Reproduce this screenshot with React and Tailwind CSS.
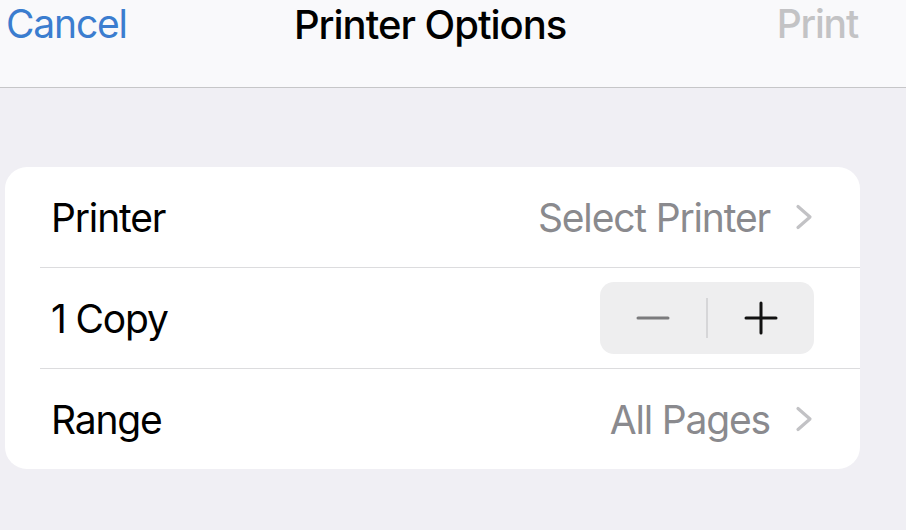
import React from "react";

const font = { fontFamily: "Inter, 'Noto Sans', sans-serif" };

function Chevron() {
  return (
    <svg width="18" height="26" viewBox="0 0 18 26" className="shrink-0">
      <path d="M3 2.5 L15 13 L3 23.5" fill="none" stroke="#c2c2c5" strokeWidth="3.2" strokeLinecap="round" strokeLinejoin="round" />
    </svg>
  );
}

function Row({ label, children }) {
  return (
    <div className="flex items-center h-[100px] pl-[46px] pr-[47px]">
      <span className="text-[39px] leading-none tracking-[-0.03em] text-black">{label}</span>
      <div className="ml-auto flex items-center">{children}</div>
    </div>
  );
}

export default function App() {
  return (
    <div className="w-[906px] h-[530px] bg-[#f0eff4] flex flex-col overflow-hidden" style={font}>
      <div className="h-[88px] shrink-0 bg-[#f9f9fb] border-b border-[#c6c6c8] flex items-start pt-[4px]">
        <span className="pl-[6px] text-[39px] leading-[1.05] tracking-[-0.03em] text-[#3b7dcf]">Cancel</span>
        <span className="ml-[167px] text-[40px] leading-[1.05] font-medium tracking-[-0.025em] text-black">Printer Options</span>
        <span className="ml-auto pr-[48px] text-[39px] leading-[1.05] font-medium tracking-[-0.03em] text-[#c3c3c5]">Print</span>
      </div>
      <div className="mt-[79px] ml-[5px] w-[855px] rounded-[22px] bg-white flex flex-col">
        <Row label="Printer">
          <span className="text-[39px] leading-none tracking-[-0.03em] text-[#8a8a8e] mr-[25px]">Select Printer</span>
          <Chevron />
        </Row>
        <div className="ml-[35px] h-px bg-[#dcdcde]" />
        <div className="flex items-center h-[100px] pl-[46px] pr-[46px]">
          <span className="text-[39px] leading-none tracking-[-0.03em] text-black">1 Copy</span>
          <div className="ml-auto w-[214px] h-[72px] rounded-[14px] bg-[#eeeeef] flex items-center">
            <div className="flex-1 flex items-center justify-center">
              <svg width="34" height="6" viewBox="0 0 34 6">
                <path d="M2 3 H32" stroke="#7b7b7d" strokeWidth="3" strokeLinecap="round" />
              </svg>
            </div>
            <div className="w-[2px] h-[40px] bg-[#d6d6d8]" />
            <div className="flex-1 flex items-center justify-center">
              <svg width="34" height="34" viewBox="0 0 34 34">
                <path d="M2 17 H32 M17 2 V32" stroke="#111" strokeWidth="3" strokeLinecap="round" />
              </svg>
            </div>
          </div>
        </div>
        <div className="ml-[35px] h-px bg-[#dcdcde]" />
        <Row label="Range">
          <span className="text-[39px] leading-none tracking-[-0.03em] text-[#8a8a8e] mr-[25px]">All Pages</span>
          <Chevron />
        </Row>
      </div>
    </div>
  );
}
